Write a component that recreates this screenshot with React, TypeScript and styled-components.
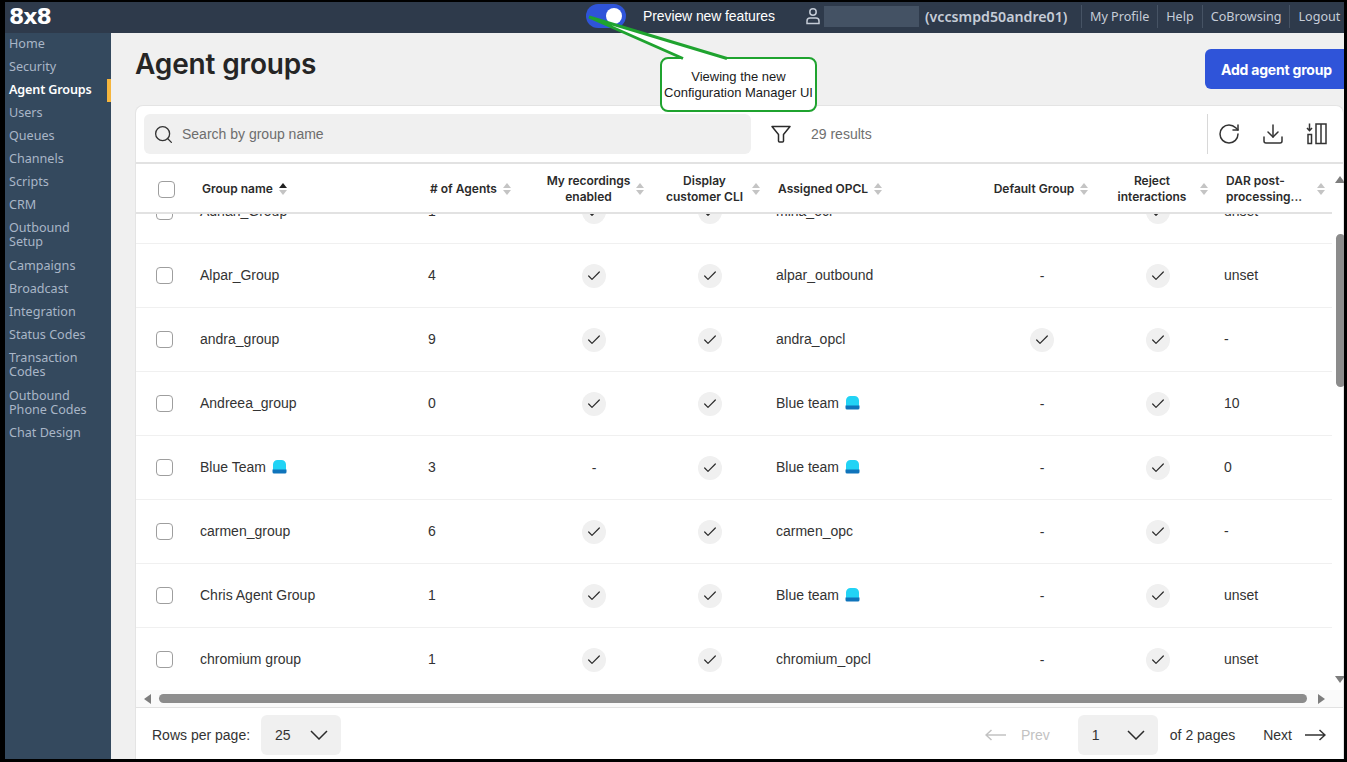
import { useLayoutEffect, useRef } from "react";
import styled, { createGlobalStyle } from "styled-components";
import { Check, Download, RotateCw, Search } from "lucide-react";

const GlobalStyle = createGlobalStyle`
  * { box-sizing: border-box; }
  html, body { margin: 0; height: 100%; overflow: hidden; }
  body { font-family: "Liberation Sans", Arial, sans-serif; color: #2b2b2b; }
`;

const Frame = styled.div`
  position: relative;
  display: flex;
  flex-direction: column;
  width: 100vw;
  height: 100vh;
  overflow: hidden;
  border-style: solid;
  border-color: #000;
  border-width: 2px 3px 3px 5px;
  background: #f0f0f0;
`;

const TopBar = styled.header`
  display: flex;
  align-items: center;
  flex: 0 0 31px;
  padding: 0 0 3px 4px;
  background: #2e3a4b;
  color: #fff;
  & > * { flex-shrink: 0; }
`;

const Logo = styled.div`
  width: 577px;
  font-family: "DejaVu Sans", sans-serif;
  font-size: 22px;
  font-weight: 700;
  letter-spacing: -1px;
`;

const Toggle = styled.div`
  display: flex;
  align-items: center;
  justify-content: flex-end;
  width: 40px;
  height: 24px;
  padding-right: 4px;
  border-radius: 12px;
  background: #2f54d9;
`;

const Knob = styled.span`
  width: 16px;
  height: 16px;
  border-radius: 50%;
  background: #fff;
`;

const PreviewLabel = styled.span`
  margin-left: 17px;
  width: 162px;
  font-size: 14px;
  letter-spacing: -0.1px;
  color: #fff;
`;

const UserIcon = styled.svg`
  width: 16px;
  height: 18px;
  margin-right: 3px;
  color: #c4cbd6;
`;

const Redacted = styled.div`
  width: 95px;
  height: 21px;
  margin-right: 6px;
  background: #445264;
`;

const Account = styled.span`
  width: 156px;
  font-family: "Noto Sans", sans-serif;
  font-size: 14.2px;
  font-weight: 600;
  white-space: nowrap;
  color: #c6cdd8;
`;

const TopLinks = styled.nav`
  display: flex;
  align-items: center;
  margin-left: auto;
  height: 100%;
`;

const TopLink = styled.a`
  display: flex;
  align-items: center;
  height: 23px;
  padding: 0 8px;
  border-left: 1px solid #465364;
  font-family: "Noto Sans", sans-serif;
  font-size: 12.6px;
  white-space: nowrap;
  color: #c6cdd8;
  &:last-child { padding-right: 4px; }
`;

const Layout = styled.div`
  display: flex;
  flex: 1;
  min-height: 0;
`;

const Sidebar = styled.aside`
  flex: 0 0 106px;
  background: #34495e;
`;

const NavItem = styled.div<{ $active?: boolean; $tall?: boolean }>`
  padding: 4px 0 ${(p) => (p.$tall ? 6 : 5)}px 4px;
  font-family: "Noto Sans", sans-serif;
  font-size: 12.6px;
  font-weight: ${(p) => (p.$active ? 600 : 400)};
  letter-spacing: ${(p) => (p.$active ? "-0.15px" : "0")};
  line-height: 14px;
  color: ${(p) => (p.$active ? "#fff" : "#a9b6c7")};
  border-right: 4px solid ${(p) => (p.$active ? "#f5b53d" : "transparent")};
`;

const Main = styled.main`
  display: flex;
  flex: 1;
  flex-direction: column;
  min-width: 0;
  padding-left: 24px;
`;

const PageHead = styled.div`
  display: flex;
  align-items: flex-start;
  justify-content: space-between;
  padding: 16px 0;
`;

const Title = styled.h1`
  margin: 0;
  font-family: Inter, sans-serif;
  font-size: 28px;
  font-weight: 600;
  line-height: 30px;
  letter-spacing: -0.15px;
  color: #252525;
`;

const AddButton = styled.button`
  width: 144px;
  height: 40px;
  margin-right: -5px;
  padding: 0 0 0 4px;
  border: 0;
  border-radius: 6px;
  background: #2f54d9;
  color: #fff;
  font-family: Inter, sans-serif;
  font-size: 14px;
  font-weight: 700;
  letter-spacing: -0.2px;
  text-align: left;
  text-indent: 12px;
`;

const Card = styled.section`
  display: flex;
  flex: 1;
  flex-direction: column;
  min-height: 0;
  border: 1px solid #e4e4e4;
  border-bottom: 0;
  border-radius: 8px 8px 0 0;
  background: #fff;
`;

const Toolbar = styled.div`
  display: flex;
  align-items: center;
  flex: 0 0 56px;
  padding: 0 8px;
`;

const SearchBox = styled.div`
  display: flex;
  align-items: center;
  gap: 8px;
  width: 607px;
  height: 40px;
  padding-left: 9px;
  border-radius: 6px;
  background: #f0f0f0;
  font-size: 14px;
  color: #6d6d6d;
`;

const FilterButton = styled.div`
  display: flex;
  margin-left: 19px;
  color: #2b2b2b;
`;

const Results = styled.span`
  margin-left: 19px;
  font-size: 14px;
  color: #6f6f6f;
`;

const ToolActions = styled.div`
  display: flex;
  align-items: center;
  gap: 20px;
  height: 40px;
  margin-left: auto;
  padding-left: 9px;
  padding-right: 6px;
  border-left: 1px solid #d8d8d8;
  color: #333;
`;

const TableArea = styled.div`
  display: flex;
  flex: 1;
  min-height: 0;
  border-top: 2px solid #e2e2e2;
`;

const TableColumn = styled.div`
  display: flex;
  flex: 0 0 1196px;
  flex-direction: column;
  min-width: 0;
  min-height: 0;
`;

const columns = "54px 229px 117px 116px 116px 216px 116px 116px 116px";

const HeadRow = styled.div`
  display: grid;
  grid-template-columns: ${columns};
  flex: 0 0 50px;
  align-items: center;
  padding: 2px 0 0 2px;
  border-bottom: 2px solid #e2e2e2;
`;

const HeadCell = styled.div<{ $center?: boolean; $inset?: number; $endInset?: number; $gap?: number }>`
  display: flex;
  align-items: center;
  justify-content: ${(p) => (p.$center ? "center" : "flex-start")};
  gap: ${(p) => p.$gap ?? 5}px;
  padding-left: ${(p) => p.$inset ?? 0}px;
  padding-right: ${(p) => p.$endInset ?? 0}px;
  font-family: Inter, sans-serif;
  font-size: 12px;
  font-weight: 600;
  line-height: 16px;
  color: #2b2b2b;
`;

const HeadLabel = styled.span<{ $center?: boolean }>`
  text-align: ${(p) => (p.$center ? "center" : "left")};
`;

const SortIcon = styled.svg`
  flex: 0 0 10px;
  width: 10px;
  height: 14px;
`;

const TableBody = styled.div`
  flex: 1;
  min-height: 0;
  overflow: hidden;
`;

const Row = styled.div`
  display: grid;
  grid-template-columns: ${columns};
  align-items: center;
  height: 64px;
  border-bottom: 1px solid #f0f0f0;
  font-size: 14px;
  color: #333;
`;

const CheckCell = styled.div`
  display: flex;
  padding-left: 20px;
`;

const CheckBox = styled.span`
  display: block;
  width: 17px;
  height: 17px;
  border: 1.5px solid #9e9e9e;
  border-radius: 4px;
  background: #fff;
`;

const TextCell = styled.div<{ $inset?: number }>`
  display: flex;
  align-items: center;
  gap: 6px;
  padding-left: ${(p) => p.$inset ?? 10}px;
  padding-bottom: 2px;
`;

const FlagCell = styled.div`
  display: flex;
  justify-content: center;
`;

const Tick = styled.span`
  display: flex;
  align-items: center;
  justify-content: center;
  width: 24px;
  height: 24px;
  border-radius: 50%;
  background: #f0f0f0;
  color: #2b2b2b;
`;

const HScroll = styled.div`
  display: flex;
  align-items: center;
  flex: 0 0 17px;
  padding-left: 8px;
  background: #fafafa;
`;

const HThumb = styled.div`
  width: 1148px;
  height: 9px;
  margin: 0 11px 0 8px;
  border-radius: 5px;
  background: #8c8c8c;
`;

const Arrow = styled.span<{ $dir: "left" | "right" | "up" | "down" }>`
  width: 0;
  height: 0;
  border-style: solid;
  border-color: transparent;
  ${(p) =>
    p.$dir === "left"
      ? "border-width: 5px 7px 5px 0; border-right-color: #7d7d7d;"
      : p.$dir === "right"
        ? "border-width: 5px 0 5px 7px; border-left-color: #7d7d7d;"
        : p.$dir === "up"
          ? "border-width: 0 5px 7px; border-bottom-color: #7d7d7d;"
          : "border-width: 7px 5px 0; border-top-color: #7d7d7d;"}
`;

const VScroll = styled.div`
  display: flex;
  flex: 1;
  flex-direction: column;
  align-items: center;
  padding: 12px 0 7px 3px;
`;

const VThumb = styled.div`
  width: 9px;
  height: 153px;
  margin: 51px 0 auto;
  border-radius: 5px;
  background: #8c8c8c;
`;

const Footer = styled.footer`
  display: flex;
  align-items: center;
  flex: 0 0 52px;
  padding: 2px 0 0 16px;
  border-top: 1px solid #e2e2e2;
  font-size: 14px;
  color: #333;
`;

const PageSelect = styled.div<{ $left: number }>`
  display: flex;
  align-items: center;
  justify-content: space-between;
  width: 80px;
  height: 40px;
  margin-left: ${(p) => p.$left}px;
  padding: 0 13px 0 14px;
  border-radius: 6px;
  background: #f0f0f0;
`;

const Pager = styled.div<{ $muted?: boolean; $gap: number }>`
  display: flex;
  align-items: center;
  gap: ${(p) => p.$gap}px;
  color: ${(p) => (p.$muted ? "#c2c2c2" : "#333")};
`;

const PrevPager = styled(Pager)`
  margin-left: auto;
`;

const PagesLabel = styled.span`
  margin: 0 28px 0 12px;
`;

const NextPager = styled(Pager)`
  margin-right: 17px;
`;

const Callout = styled.div`
  position: absolute;
  left: 655px;
  top: 55px;
  display: flex;
  align-items: center;
  justify-content: center;
  width: 157px;
  height: 55px;
  border: 2.5px solid #1fa32f;
  border-radius: 8px;
  background: #fff;
  font-size: 13px;
  line-height: 16px;
  text-align: center;
  white-space: nowrap;
  color: #1a1a1a;
`;

const CalloutTail = styled.svg`
  position: absolute;
  left: 580px;
  top: 10px;
  width: 150px;
  height: 50px;
`;

const navItems = [
  "Home",
  "Security",
  "Agent Groups",
  "Users",
  "Queues",
  "Channels",
  "Scripts",
  "CRM",
  "Outbound Setup",
  "Campaigns",
  "Broadcast",
  "Integration",
  "Status Codes",
  "Transaction Codes",
  "Outbound Phone Codes",
  "Chat Design",
];

const tallNavItems = ["Outbound Setup", "Transaction Codes"];

type GroupRow = {
  name: string;
  nameBadge?: boolean;
  agents: number;
  recordings: boolean;
  cli: boolean;
  opcl: string;
  opclBadge?: boolean;
  isDefault: boolean;
  reject: boolean;
  dar: string;
};

const rows: GroupRow[] = [
  { name: "Adnan_Group", agents: 1, recordings: true, cli: true, opcl: "mina_ocr", isDefault: false, reject: true, dar: "unset" },
  { name: "Alpar_Group", agents: 4, recordings: true, cli: true, opcl: "alpar_outbound", isDefault: false, reject: true, dar: "unset" },
  { name: "andra_group", agents: 9, recordings: true, cli: true, opcl: "andra_opcl", isDefault: true, reject: true, dar: "-" },
  { name: "Andreea_group", agents: 0, recordings: true, cli: true, opcl: "Blue team", opclBadge: true, isDefault: false, reject: true, dar: "10" },
  { name: "Blue Team", nameBadge: true, agents: 3, recordings: false, cli: true, opcl: "Blue team", opclBadge: true, isDefault: false, reject: true, dar: "0" },
  { name: "carmen_group", agents: 6, recordings: true, cli: true, opcl: "carmen_opc", isDefault: false, reject: true, dar: "-" },
  { name: "Chris Agent Group", agents: 1, recordings: true, cli: true, opcl: "Blue team", opclBadge: true, isDefault: false, reject: true, dar: "unset" },
  { name: "chromium group", agents: 1, recordings: true, cli: true, opcl: "chromium_opcl", isDefault: false, reject: true, dar: "unset" },
];

const Sort = ({ active }: { active?: boolean }) => (
  <SortIcon viewBox="0 0 10 14">
    <path d="M5 1l4 5H1z" fill={active ? "#222" : "#c4c4c4"} />
    <path d="M5 13L1 8h8z" fill="#c4c4c4" />
  </SortIcon>
);

const Badge = () => (
  <svg width="15" height="15" viewBox="0 0 15 15">
    <path d="M1 11V5.500A4.500 4.500 0 0 1 5.500 1h4A4.500 4.500 0 0 1 14 5.500V11z" fill="#22d3f5" />
    <path d="M.5 10.500h14v2.400a1.600 1.600 0 0 1-1.600 1.600H2.100A1.600 1.600 0 0 1 .5 12.900z" fill="#0f74bb" />
  </svg>
);

const Chevron = () => (
  <svg width="18" height="10" viewBox="0 0 18 10" fill="none" stroke="#2b2b2b" strokeWidth="1.500">
    <path d="M1 1l8 8 8-8" />
  </svg>
);

const LongArrow = ({ left }: { left?: boolean }) => (
  <svg width="21" height="12" viewBox="0 0 21 12" fill="none" stroke="currentColor" strokeWidth="1.500">
    <path d={left ? "M21 6H1M6.500 1L1 6l5.500 5" : "M0 6h20M14.500 1L20 6l-5.500 5"} />
  </svg>
);

const Flag = ({ on }: { on: boolean }) => (
  <FlagCell>
    {on ? (
      <Tick>
        <Check size={16} strokeWidth={1.8} />
      </Tick>
    ) : (
      "-"
    )}
  </FlagCell>
);

const App = () => {
  const bodyRef = useRef<HTMLDivElement>(null);

  // the list in the screenshot is scrolled a little way down
  useLayoutEffect(() => {
    if (bodyRef.current) bodyRef.current.scrollTop = 34;
  }, []);

  return (
    <Frame>
      <GlobalStyle />
      <TopBar>
        <Logo>8x8</Logo>
        <Toggle>
          <Knob />
        </Toggle>
        <PreviewLabel>Preview new features</PreviewLabel>
        <UserIcon viewBox="0 0 16 18" fill="none" stroke="currentColor" strokeWidth="1.5">
          <circle cx="8" cy="5" r="3.2" />
          <path d="M2 16.500v-2.500a3 3 0 0 1 3-3h6a3 3 0 0 1 3 3v2.500z" />
        </UserIcon>
        <Redacted />
        <Account>(vccsmpd50andre01)</Account>
        <TopLinks>
          <TopLink>My Profile</TopLink>
          <TopLink>Help</TopLink>
          <TopLink>CoBrowsing</TopLink>
          <TopLink>Logout</TopLink>
        </TopLinks>
      </TopBar>
      <Layout>
        <Sidebar>
          {navItems.map((item) => (
            <NavItem key={item} $active={item === "Agent Groups"} $tall={tallNavItems.includes(item)}>
              {item}
            </NavItem>
          ))}
        </Sidebar>
        <Main>
          <PageHead>
            <Title>Agent groups</Title>
            <AddButton>Add agent group</AddButton>
          </PageHead>
          <Card>
            <Toolbar>
              <SearchBox>
                <Search size={21} strokeWidth={1.5} color="#333" />
                Search by group name
              </SearchBox>
              <FilterButton>
                <svg width="22" height="22" viewBox="0 0 22 22" fill="none" stroke="currentColor" strokeWidth="1.5" strokeLinejoin="round">
                  <path d="M2 3.500h18l-6.500 8v6.500a1 1 0 0 1-1 1h-3a1 1 0 0 1-1-1v-6.500z" />
                </svg>
              </FilterButton>
              <Results>29 results</Results>
              <ToolActions>
                <RotateCw size={24} strokeWidth={1.5} />
                <Download size={24} strokeWidth={1.5} />
                <svg width="24" height="24" viewBox="0 0 24 24" fill="none" stroke="currentColor" strokeWidth="1.500">
                  <path d="M4.500 1.500v7M2 6l2.500 2.700L7 6M3 12.500h3.500v9H3z" />
                  <path d="M11 2h10v19.500H11zM16 2v19.500" />
                </svg>
              </ToolActions>
            </Toolbar>
            <TableArea>
              <TableColumn>
                <HeadRow>
                  <CheckCell>
                    <CheckBox />
                  </CheckCell>
                  <HeadCell $inset={10}>
                    Group name <Sort active />
                  </HeadCell>
                  <HeadCell $inset={9}>
                    # of Agents <Sort />
                  </HeadCell>
                  <HeadCell $center>
                    <HeadLabel $center>
                      My recordings
                      <br />
                      enabled
                    </HeadLabel>
                    <Sort />
                  </HeadCell>
                  <HeadCell $center $inset={3} $gap={8}>
                    <HeadLabel $center>
                      Display
                      <br />
                      customer CLI
                    </HeadLabel>
                    <Sort />
                  </HeadCell>
                  <HeadCell $inset={8}>
                    Assigned OPCL <Sort />
                  </HeadCell>
                  <HeadCell $center $endInset={5}>
                    Default Group <Sort />
                  </HeadCell>
                  <HeadCell $center $inset={7} $gap={13}>
                    <HeadLabel $center>
                      Reject
                      <br />
                      interactions
                    </HeadLabel>
                    <Sort />
                  </HeadCell>
                  <HeadCell $inset={8} $gap={14}>
                    <HeadLabel>
                      DAR post-
                      <br />
                      processing...
                    </HeadLabel>
                    <Sort />
                  </HeadCell>
                </HeadRow>
                <TableBody ref={bodyRef}>
                  {rows.map((row) => (
                    <Row key={row.name}>
                      <CheckCell>
                        <CheckBox />
                      </CheckCell>
                      <TextCell>
                        {row.name}
                        {row.nameBadge && <Badge />}
                      </TextCell>
                      <TextCell $inset={9}>{row.agents}</TextCell>
                      <Flag on={row.recordings} />
                      <Flag on={row.cli} />
                      <TextCell $inset={8}>
                        {row.opcl}
                        {row.opclBadge && <Badge />}
                      </TextCell>
                      <Flag on={row.isDefault} />
                      <Flag on={row.reject} />
                      <TextCell $inset={8}>{row.dar}</TextCell>
                    </Row>
                  ))}
                </TableBody>
              </TableColumn>
              <VScroll>
                <Arrow $dir="up" />
                <VThumb />
                <Arrow $dir="down" />
              </VScroll>
            </TableArea>
            <HScroll>
              <Arrow $dir="left" />
              <HThumb />
              <Arrow $dir="right" />
            </HScroll>
            <Footer>
              Rows per page:
              <PageSelect $left={11}>
                25
                <Chevron />
              </PageSelect>
              <PrevPager $muted $gap={15}>
                <LongArrow left />
                Prev
              </PrevPager>
              <PageSelect $left={28}>
                1
                <Chevron />
              </PageSelect>
              <PagesLabel>of 2 pages</PagesLabel>
              <NextPager $gap={13}>
                Next
                <LongArrow />
              </NextPager>
            </Footer>
          </Card>
        </Main>
      </Layout>
      <Callout>
        <div>
          Viewing the new
          <br />
          Configuration Manager UI
        </div>
      </Callout>
      <CalloutTail viewBox="0 0 150 50">
        <path d="M5 5L98 47h44z" fill="#fff" />
        <path d="M98 46.500L4 5l138 41.500" fill="none" stroke="#1fa32f" strokeWidth="3" />
      </CalloutTail>
    </Frame>
  );
};

export default App;
